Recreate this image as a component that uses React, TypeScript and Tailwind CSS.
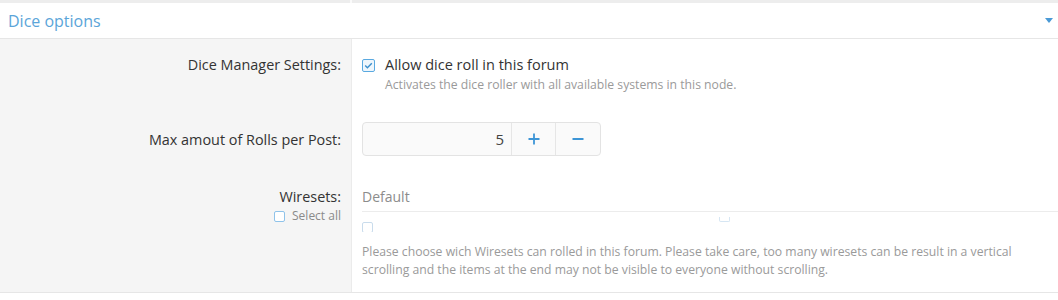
const font = { fontFamily: '"Open Sans", "Liberation Sans", sans-serif' };

const CheckedBox = () => (
  <svg width="13" height="13" viewBox="0 0 13 13" className="shrink-0">
    <rect x="0.5" y="0.5" width="12" height="12" rx="1.5" fill="#eef6fc" stroke="#5aa9e0" />
    <path d="M3.2 6.6 L5.4 8.8 L9.8 4.2" fill="none" stroke="#3d8fcc" strokeWidth="1.4" />
  </svg>
);

const EmptyBox = ({ className = "" }: { className?: string }) => (
  <div className={`w-[11px] h-[11px] rounded-[2px] border border-[#8fc3ea] bg-white ${className}`} />
);

const App = () => {
  return (
    <div className="w-[1058px] h-[300px] bg-white text-[#333]" style={font}>
      <div className="flex h-[3px]">
        <div className="w-[352px] bg-[#ededed] border-r-2 border-[#fafafa]" />
        <div className="flex-1 bg-[#ededed]" />
      </div>
      <div className="flex items-center justify-between h-[36px] pl-2 pr-[5px] border-b border-[#e6e6e6]">
        <span className="text-[16px] text-[#5ba5d9]">Dice options</span>
        <svg width="8" height="5" viewBox="0 0 8 5">
          <path d="M0 0 H8 L4 5 Z" fill="#4a9ad6" />
        </svg>
      </div>

      <div className="flex">
        <div className="w-[352px] shrink-0 bg-[#f5f5f5] border-r border-[#ebebeb] pt-[16px] pr-[10px] text-right text-[14.4px] leading-[20px]">
          Dice Manager Settings:
        </div>
        <div className="flex-1 pl-[10px] pt-[16px] pb-[16px]">
          <label className="flex items-center gap-[10px] text-[14.5px] leading-[20px]">
            <CheckedBox />
            Allow dice roll in this forum
          </label>
          <p className="pl-[23px] mt-[1px] text-[12.2px] leading-[18px] text-[#9a9a9a]">
            Activates the dice roller with all available systems in this node.
          </p>
        </div>
      </div>

      <div className="flex">
        <div className="w-[352px] shrink-0 bg-[#f5f5f5] border-r border-[#ebebeb] pt-[20px] pr-[10px] text-right text-[14.4px] leading-[20px]">
          Max amout of Rolls per Post:
        </div>
        <div className="flex-1 pl-[10px] pt-[12px] pb-[20px]">
          <div className="flex w-[239px] h-[34px] rounded-[4px] border border-[#e3e3e3] bg-[#fafafa] overflow-hidden text-[15px]">
            <div className="flex-1 flex items-center justify-end pr-[7px] text-[#444]">5</div>
            <div className="w-[44px] flex items-center justify-center border-l border-[#e6e6e6]">
              <svg width="12" height="12" viewBox="0 0 12 12">
                <path d="M6 0.5 V11.5 M0.5 6 H11.5" stroke="#3d95d6" strokeWidth="1.8" />
              </svg>
            </div>
            <div className="w-[45px] flex items-center justify-center border-l border-[#e6e6e6]">
              <svg width="12" height="12" viewBox="0 0 12 12">
                <path d="M0.5 6 H11.5" stroke="#3d95d6" strokeWidth="1.8" />
              </svg>
            </div>
          </div>
        </div>
      </div>

      <div className="flex border-b border-[#e6e6e6]">
        <div className="w-[352px] shrink-0 bg-[#f5f5f5] border-r border-[#ebebeb] pt-[11px] pr-[10px] flex flex-col items-end">
          <span className="text-[14.4px] leading-[20px]">Wiresets:</span>
          <label className="flex items-center gap-[7px] mt-[1px] text-[12px] leading-[16px] text-[#8a8a8a]">
            <EmptyBox />
            Select all
          </label>
        </div>
        <div className="flex-1 pl-[10px] pt-[11px] pb-[13px]">
          <div className="pb-[4px] border-b border-[#ececec] text-[14px] leading-[20px] text-[#8c8c8c]">Default</div>
          <div className="flex items-start h-[20px] overflow-hidden">
            <EmptyBox className="mt-[10px] border-[#c9dcec]" />
            <div className="ml-[346px] mt-[5px] w-[11px] h-[5px] rounded-b-[2px] border border-t-0 border-[#d6e6f3]" />
          </div>
          <p className="mt-[11px] pr-[20px] text-[12.2px] leading-[18px] text-[#9a9a9a]">
            Please choose wich Wiresets can rolled in this forum. Please take care, too many wiresets can be result in a vertical scrolling and the items at the end may not be visible to everyone without scrolling.
          </p>
        </div>
      </div>
    </div>
  );
};

export default App;
